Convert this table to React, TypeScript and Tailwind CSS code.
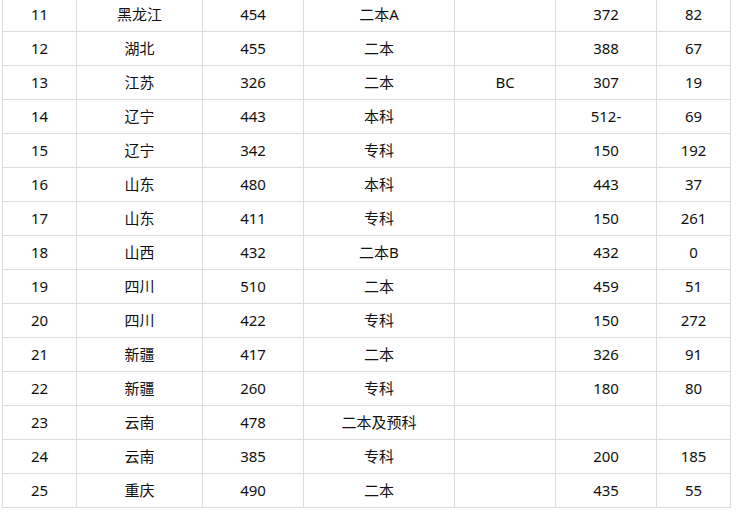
import React from "react";

const rows: string[][] = [
  ["11", "黑龙江", "454", "二本A", "", "372", "82"],
  ["12", "湖北", "455", "二本", "", "388", "67"],
  ["13", "江苏", "326", "二本", "BC", "307", "19"],
  ["14", "辽宁", "443", "本科", "", "512-", "69"],
  ["15", "辽宁", "342", "专科", "", "150", "192"],
  ["16", "山东", "480", "本科", "", "443", "37"],
  ["17", "山东", "411", "专科", "", "150", "261"],
  ["18", "山西", "432", "二本B", "", "432", "0"],
  ["19", "四川", "510", "二本", "", "459", "51"],
  ["20", "四川", "422", "专科", "", "150", "272"],
  ["21", "新疆", "417", "二本", "", "326", "91"],
  ["22", "新疆", "260", "专科", "", "180", "80"],
  ["23", "云南", "478", "二本及预科", "", "", ""],
  ["24", "云南", "385", "专科", "", "200", "185"],
  ["25", "重庆", "490", "二本", "", "435", "55"],
];

const widths = [74, 126, 101, 151, 101, 101, 74];

export default function App() {
  return (
    <div className="w-[736px] h-[514px] overflow-hidden bg-white">
      <table
        className="ml-[2px] -mt-[3px] border-collapse table-fixed text-[15px] text-[#111]"
        style={{ fontFamily: '"Noto Sans", "Noto Sans CJK SC", sans-serif' }}
      >
        <colgroup>
          {widths.map((w, i) => (
            <col key={i} style={{ width: w }} />
          ))}
        </colgroup>
        <tbody>
          {rows.map((r, i) => (
            <tr key={i} className="h-[34px]">
              {r.map((c, j) => (
                <td
                  key={j}
                  className="border border-[#dddddd] p-0 pb-[2px] text-center align-middle leading-[20px]"
                >
                  {c}
                </td>
              ))}
            </tr>
          ))}
        </tbody>
      </table>
    </div>
  );
}
